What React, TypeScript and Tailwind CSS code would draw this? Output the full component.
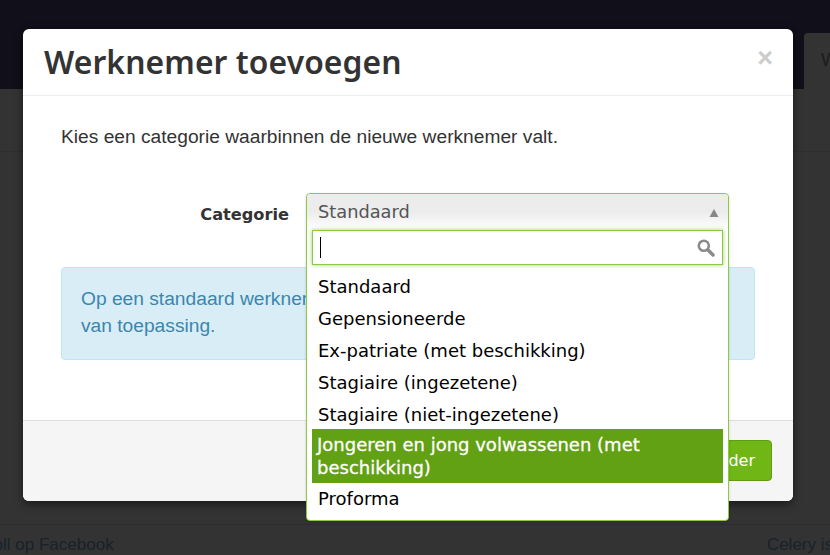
import React from "react";

const options = [
  "Standaard",
  "Gepensioneerde",
  "Ex-patriate (met beschikking)",
  "Stagiaire (ingezetene)",
  "Stagiaire (niet-ingezetene)",
];

export default function App() {
  return (
    <div className="relative w-[830px] h-[555px] overflow-hidden bg-[#333333] font-['Liberation_Sans',sans-serif]">
      {/* Page behind the backdrop */}
      <div className="h-[89px] bg-[#100f1a] flex justify-end items-end">
        <div className="w-[26px] h-[56px] bg-[#333333] rounded-tl-[4px] pl-[17px] pt-[14px] text-[18px] text-[#1c1c1c] overflow-hidden">W</div>
      </div>
      <div className="h-[63px] bg-[#333333] border-b border-[#2e2e2e]"></div>
      <div className="h-[373px] border-b border-[#2e2e2e]"></div>
      <div className="flex justify-between pt-[10px] text-[17px] leading-[20px] text-[#17222b] whitespace-nowrap">
        <span className="ml-[-47px]">Celeroll op Facebook</span>
        <span className="mr-[-3px]">Celery is</span>
      </div>

      {/* Modal */}
      <div className="absolute left-[23px] top-[29px] w-[770px] h-[472px] bg-white rounded-[6px] shadow-[0_3px_9px_rgba(0,0,0,0.5)] flex flex-col overflow-hidden">
        <div className="h-[67px] shrink-0 border-b border-[#eeeeee] flex items-start justify-between pl-[21px] pr-[20px]">
          <h3 className="font-['Noto_Sans',sans-serif] font-semibold text-[31.8px] leading-[66px] tracking-[0.1px] text-[#333333]">Werknemer toevoegen</h3>
          <span className="font-['Liberation_Sans',sans-serif] font-bold text-[27px] leading-[58px] text-[#cccccc]">×</span>
        </div>
        <div className="flex-1 px-[38px]">
          <p className="pt-[28px] text-[19.2px] leading-[26px] text-[#333333]">Kies een categorie waarbinnen de nieuwe werknemer valt.</p>
          <div className="mt-[53px] h-[22px] w-[228px] text-right font-['DejaVu_Sans',sans-serif] font-bold text-[16.2px] leading-[24px] text-[#333333]">Categorie</div>
          <div className="mt-[42px] h-[93px] rounded-[4px] border border-[#bce8f1] bg-[#d9edf7] px-[19px] py-[17px] text-[19.2px] leading-[27px] text-[#3a87ad]">
            Op een standaard werknemer
            <br />
            van toepassing.
          </div>
        </div>
        <div className="h-[81px] shrink-0 border-t border-[#dddddd] bg-[#f5f5f5] flex justify-end pt-[19px] pr-[21px]">
          <button className="h-[41px] w-[100px] rounded-[4px] border border-[#5f9e12] bg-[#70b716] text-right pr-[16px] font-['DejaVu_Sans',sans-serif] text-[16px] text-white">
            Verder
          </button>
        </div>
      </div>

      {/* Open select dropdown */}
      <div className="absolute left-[306px] top-[193px] w-[423px] h-[328px] rounded-[4px] border border-[#8ccb3e] bg-white font-['DejaVu_Sans',sans-serif] shadow-[0_1px_3px_rgba(0,0,0,0.15)]">
        <div className="h-[36px] rounded-t-[4px] bg-gradient-to-b from-[#ececec] from-50% to-white flex items-start justify-between pl-[11px] pr-[9px] text-[17.8px] leading-[35px] text-[#555555]">
          <span>Standaard</span>
          <svg width="10" height="8" viewBox="0 0 10 8" className="mt-[15px]">
            <path d="M5 0 L9.5 8 L0.5 8 Z" fill="#888888" />
          </svg>
        </div>
        <div className="mx-[5px] h-[35px] border border-[#8ccb3e] bg-white flex items-center justify-between pl-[7px] pr-[7px] shadow-[0_0_4px_rgba(130,200,60,0.8)]">
          <span className="block w-px h-[21px] bg-black"></span>
          <svg width="18" height="18" viewBox="0 0 18 18" fill="none" stroke="#8a8a8a">
            <circle cx="6.8" cy="6.8" r="5" strokeWidth="2.6" />
            <path d="M10.8 10.8 L16 16" strokeWidth="3.4" strokeLinecap="round" />
          </svg>
        </div>
        <ul className="mx-[5px] mt-[4px] text-[18px] text-black">
          {options.map((o) => (
            <li key={o} className="h-[32px] px-[6px] leading-[35px] whitespace-nowrap">{o}</li>
          ))}
          <li className="h-[54px] bg-[#62a014] px-[5px] py-[4px] leading-[23px] text-white [-webkit-text-stroke:0.3px_white]">
            Jongeren en jong volwassenen (met beschikking)
          </li>
          <li className="h-[32px] px-[6px] leading-[31px]">Proforma</li>
        </ul>
      </div>
    </div>
  );
}
